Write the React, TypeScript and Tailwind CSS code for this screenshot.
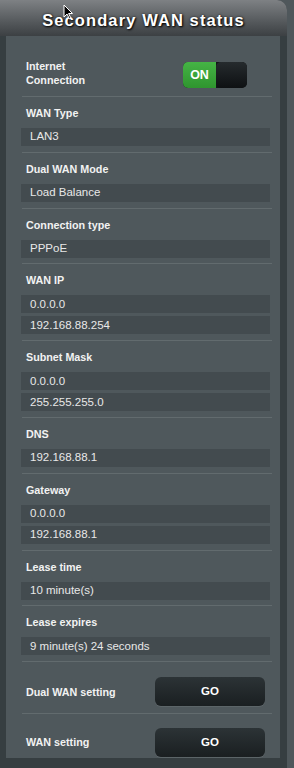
import React from "react";

type Section = { label: string; values: string[] };

const sections: Section[] = [
  { label: "WAN Type", values: ["LAN3"] },
  { label: "Dual WAN Mode", values: ["Load Balance"] },
  { label: "Connection type", values: ["PPPoE"] },
  { label: "WAN IP", values: ["0.0.0.0", "192.168.88.254"] },
  { label: "Subnet Mask", values: ["0.0.0.0", "255.255.255.0"] },
  { label: "DNS", values: ["192.168.88.1"] },
  { label: "Gateway", values: ["0.0.0.0", "192.168.88.1"] },
  { label: "Lease time", values: ["10 minute(s)"] },
  { label: "Lease expires", values: ["9 minute(s) 24 seconds"] },
];

function Sep() {
  return <div className="h-px ml-[16px] mr-[8px] bg-[#626b6e]" />;
}

function GoButton() {
  return (
    <div className="ml-auto w-[110px] h-[29px] rounded-[6px] bg-gradient-to-b from-[#2c3336] to-[#1a1f21] flex items-center justify-center text-white font-bold text-[11.5px] shadow-[0_1px_0_rgba(255,255,255,0.08)]">
      GO
    </div>
  );
}

export default function App() {
  return (
    <div
      className="relative w-[294px] h-[768px] bg-[#4f575b] overflow-hidden"
      style={{ fontFamily: '"Liberation Sans", Arial, sans-serif' }}
    >
      <div className="w-[287px] h-full bg-[#363e41] rounded-tr-[10px] flex flex-col">
        {/* Header */}
        <div className="h-[36px] shrink-0 rounded-tr-[10px] bg-gradient-to-b from-[#7e8184] via-[#5c6063] to-[#3c4043] flex items-center justify-center pt-[4px]">
          <span
            className="text-white font-bold text-[16.5px] tracking-[1.1px] leading-none"
            style={{ textShadow: "1px 1px 2px #000, 0 0 3px rgba(0,0,0,0.6)" }}
          >
            Secondary WAN status
          </span>
        </div>

        {/* Panel */}
        <div className="ml-[6px] w-[274px] h-[722px] bg-[#4f585c] flex flex-col">
          {/* Internet connection */}
          <div className="flex items-start pl-[20px] pr-[33px] pt-[26px] pb-[8px]">
            <div className="mt-[-2px] text-[10.75px] leading-[13.5px] font-bold text-[#f2f2f2]">
              Internet
              <br />
              Connection
            </div>
            <div className="ml-auto w-[64px] h-[26px] rounded-[5px] bg-[#121618] flex overflow-hidden">
              <div className="w-[33px] h-full bg-gradient-to-b from-[#45b445] to-[#2f952f] flex items-center justify-center text-white font-bold text-[12.5px]">
                ON
              </div>
              <div className="flex-1 h-full rounded-[5px] bg-gradient-to-b from-[#262b2e] to-[#0e1113]" />
            </div>
          </div>

          {sections.map((s) => (
            <div key={s.label}>
              <Sep />
              <div className="pt-[9px] pb-[5.8px]">
                <div className="pl-[20px] h-[14px] leading-[14px] text-[10.75px] font-bold text-[#f2f2f2]">
                  {s.label}
                </div>
                <div className="mt-[8px] flex flex-col gap-[3px] ml-[15px] mr-[10px]">
                  {s.values.map((v, i) => (
                    <div
                      key={i}
                      className="h-[18px] bg-[#434b4f] pl-[9px] flex items-center text-[11.5px] text-[#e8e8e8]"
                    >
                      {v}
                    </div>
                  ))}
                </div>
              </div>
            </div>
          ))}

          <Sep />
          <div className="flex items-center pl-[20px] pr-[15px] pt-[15px] pb-[6.5px]">
            <span className="text-[10.75px] font-bold text-[#f2f2f2]">Dual WAN setting</span>
            <GoButton />
          </div>
          <Sep />
          <div className="flex items-center pl-[20px] pr-[15px] pt-[14px]">
            <span className="text-[10.75px] font-bold text-[#f2f2f2]">WAN setting</span>
            <GoButton />
          </div>
        </div>
      </div>

      {/* mouse cursor */}
      <svg className="absolute left-[63px] top-[4px]" width="11" height="16" viewBox="0 0 11 16">
        <path d="M1 1 L1 13 L4 10 L6.5 15 L8 14.3 L5.6 9.5 L9.5 9.5 Z" fill="#000" stroke="#fff" strokeWidth="1" />
      </svg>
    </div>
  );
}
